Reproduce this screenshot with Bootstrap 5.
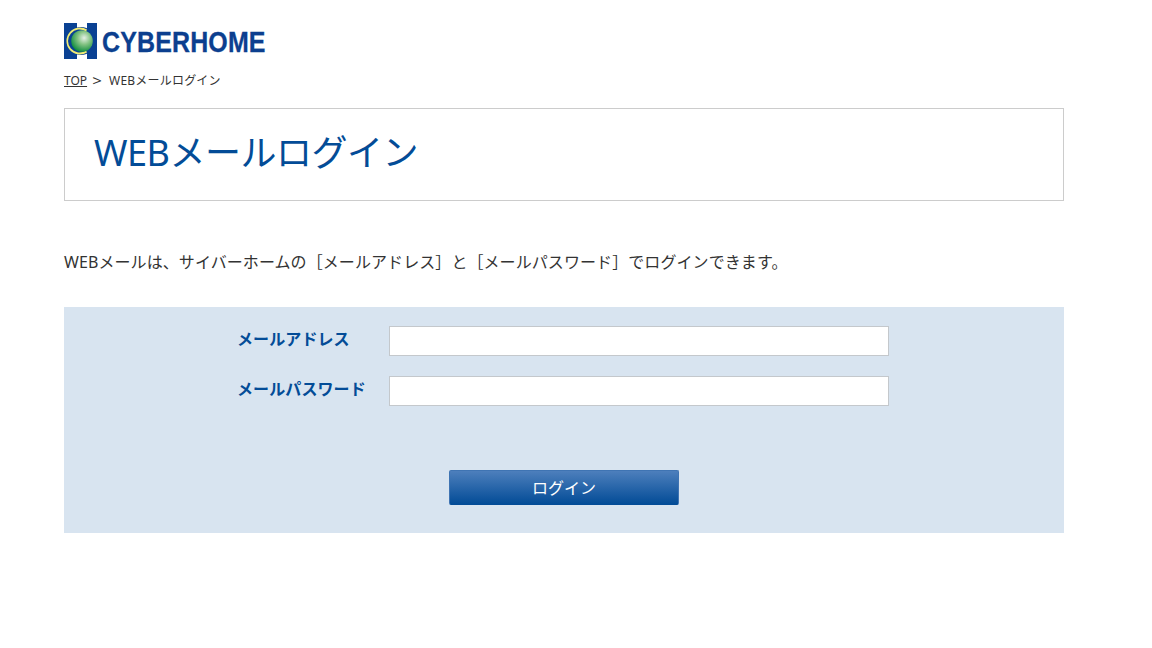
<!DOCTYPE html>
<html lang="ja">
<head>
  <meta charset="UTF-8" />
  <meta name="viewport" content="width=device-width, initial-scale=1.0" />
  <title>WEBメールログイン</title>
  <link href="https://cdn.jsdelivr.net/npm/bootstrap@5.3.0/dist/css/bootstrap.min.css" rel="stylesheet" />
  <style>
    body { font-family: "Noto Sans", "Noto Sans CJK JP", sans-serif; color: #333; background: #fff; }
    .page-wrap { width: 1000px; margin-left: 64px; }
    .site-logo { height: 36px; margin-top: 23px; gap: 5px; }
    .logo-word { font-family: "Liberation Sans", sans-serif; font-weight: 700; font-size: 29px; line-height: 38px; height: 36px; color: #0c3f8f; transform: scaleX(.86); transform-origin: left; -webkit-text-stroke: .3px #0c3f8f; white-space: nowrap; letter-spacing: .2px; }
    .crumbs { font-size: 12px; line-height: 18px; margin-top: 13px; }
    .crumbs a { color: #333; }
    .crumbs .sep { margin: 0 8px 0 6px; font-size: 14px; line-height: 17px; transform: scaleX(1.2); }
    .crumb-here { letter-spacing: .2px; }
    .title-box { height: 93px; margin-top: 18px; border: 1px solid #ccc; padding-left: 29px; }
    .title-box h1 { font-size: 36px; font-weight: 400; color: #034c97; margin: 0; line-height: 87px; letter-spacing: -.5px; }
    .lead-text { font-size: 16px; line-height: 24px; margin: 49px 0 33px; letter-spacing: .08px; }
    .login-panel { background: #d8e4f0; height: 226px; padding-top: 19px; }
    .field-row { height: 30px; margin-bottom: 20px; margin-left: 173px; }
    .field-row label { width: 152px; font-size: 16px; font-weight: 700; color: #034c97; line-height: 26px; height: 30px; letter-spacing: .1px; }
    .field-row input { width: 500px; height: 30px; border: 1px solid #c4c8cc; border-radius: 0; padding: 0 6px; }
    .btn-area { margin-top: 64px; }
    .login-btn { width: 230px; height: 35px; padding: 1px 0 0; border: 1px solid #3f74b3; border-bottom-color: #034c97; border-radius: 2px; color: #fff; font-size: 16px; line-height: 33px; background: linear-gradient(#4d7fbc, #034c97); }
    .login-btn:hover { color: #fff; }
  </style>
</head>
<body>
  <div class="page-wrap">
    <div class="site-logo d-flex align-items-center">
      <svg width="33" height="36" viewBox="0 0 33 36">
        <defs>
          <radialGradient id="ball" cx="60%" cy="36%" r="68%">
            <stop offset="0" stop-color="#e6f0e6" />
            <stop offset=".45" stop-color="#82c282" />
            <stop offset="1" stop-color="#0b8a3c" />
          </radialGradient>
        </defs>
        <path fill="#0a4193" d="M0 0H13V8H23V0H33V36H23V28H13V36H0Z" />
        <circle cx="17" cy="18" r="14" fill="#0a4193" />
        <path fill="#f1ec74" d="M23 6.5A13.5 13.5 0 1 0 23 29.5L22 27.5A11.5 11.5 0 1 1 22 8.5Z" />
        <circle cx="18" cy="18" r="10.8" fill="url(#ball)" />
      </svg>
      <span class="logo-word">CYBERHOME</span>
    </div>
    <div class="crumbs d-flex"><a href="#">TOP</a><span class="sep">&gt;</span><span class="crumb-here">WEBメールログイン</span></div>
    <div class="title-box"><h1>WEBメールログイン</h1></div>
    <p class="lead-text">WEBメールは、サイバーホームの［メールアドレス］と［メールパスワード］でログインできます。</p>
    <form class="login-panel" onsubmit="return false">
      <div class="field-row d-flex">
        <label for="mail">メールアドレス</label>
        <input type="text" id="mail" />
      </div>
      <div class="field-row d-flex">
        <label for="pass">メールパスワード</label>
        <input type="password" id="pass" />
      </div>
      <div class="btn-area d-flex justify-content-center">
        <button type="submit" class="btn login-btn">ログイン</button>
      </div>
    </form>
  </div>
  <script src="https://cdn.jsdelivr.net/npm/bootstrap@5.3.0/dist/js/bootstrap.bundle.min.js"></script>
</body>
</html>
